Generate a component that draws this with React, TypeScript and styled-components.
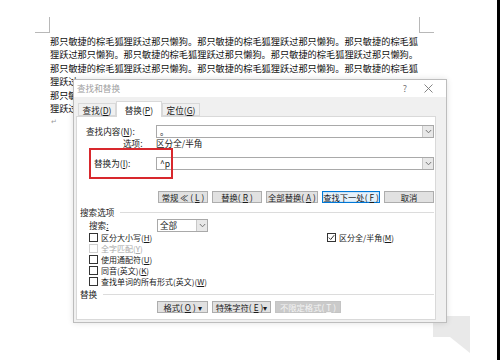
import React from "react";
import styled, { createGlobalStyle } from "styled-components";

const GlobalStyle = createGlobalStyle`
  html, body {
    margin: 0;
    padding: 0;
    background: #fff;
  }
  body {
    font-family: "Noto Sans CJK SC", "Noto Sans", sans-serif;
  }
`;

const Page = styled.div`
  position: relative;
  width: 500px;
  height: 360px;
  overflow: hidden;
  box-sizing: border-box;
  border-right: 3px solid #000;
  padding-top: 17px;
  background: #fff;
`;

const MarkRow = styled.div`
  display: flex;
  justify-content: space-between;
  width: 399px;
  margin-left: 35px;
`;

const Mark = styled.div<{ $side: "left" | "right" }>`
  width: 15px;
  height: 16px;
  box-sizing: border-box;
  border-bottom: 1px solid #b8b8b8;
  ${(p) =>
    p.$side === "left"
      ? "border-right: 1px solid #b8b8b8;"
      : "border-left: 1px solid #b8b8b8;"}
`;

const TextBlock = styled.div`
  margin: 2px 0 0 50px;
  width: 368px;
`;

const Line = styled.div<{ $full?: boolean }>`
  height: 13.4px;
  line-height: 13.4px;
  font-size: 9.2px;
  white-space: nowrap;
  text-align: ${(p) => (p.$full ? "justify" : "left")};
  text-align-last: ${(p) => (p.$full ? "justify" : "left")};
  color: #111;
`;

const ParaMark = styled.div`
  height: 13px;
  line-height: 13px;
  font-size: 7px;
  color: #999;
  margin-left: 1px;
`;

const Dialog = styled.div`
  position: absolute;
  left: 73px;
  top: 79px;
  width: 374px;
  height: 244px;
  box-sizing: border-box;
  border: 1px solid #bdbdbd;
  background: #f0f0f0;
  display: flex;
  flex-direction: column;
  font-size: 8.6px;
  color: #1a1a1a;
  box-shadow: 0 0 6px rgba(0, 0, 0, 0.12);
`;

const TitleBar = styled.div`
  height: 17px;
  background: #fff;
  display: flex;
  align-items: center;
  padding-left: 3px;
`;

const Title = styled.span`
  flex: 1;
  color: #a0a0a0;
  line-height: 17px;
`;

const TitleButton = styled.span<{ $w: number }>`
  width: ${(p) => p.$w}px;
  display: flex;
  justify-content: center;
  align-items: center;
  color: #777;
  font-size: 9px;
`;

const TabBar = styled.div`
  height: 19px;
  display: flex;
  align-items: flex-end;
  padding-left: 4px;
  position: relative;
  z-index: 1;
`;

const Tab = styled.div<{ $active?: boolean; $w: number }>`
  width: ${(p) => p.$w}px;
  height: ${(p) => (p.$active ? 16 : 13)}px;
  margin-bottom: ${(p) => (p.$active ? -1 : 0)}px;
  box-sizing: border-box;
  display: flex;
  justify-content: center;
  align-items: center;
  background: ${(p) => (p.$active ? "#fff" : "#f0f0f0")};
  border: 1px solid #d9d9d9;
  border-bottom: ${(p) => (p.$active ? "none" : "1px solid #d9d9d9")};
  line-height: 12px;
`;

const Panel = styled.div`
  position: relative;
  flex: 1;
  margin: 0 10px 2px 2px;
  box-sizing: border-box;
  border: 1px solid #d9d9d9;
  background: #fff;
  padding: 8px 1px 0 9px;
  display: flex;
  flex-direction: column;
`;

const FieldRow = styled.div<{ $top?: number }>`
  display: flex;
  align-items: center;
  height: 13px;
  margin-top: ${(p) => p.$top ?? 0}px;
`;

const Label = styled.span<{ $w: number; $indent?: number }>`
  width: ${(p) => p.$w}px;
  padding-left: ${(p) => p.$indent ?? 0}px;
  box-sizing: border-box;
  white-space: nowrap;
  line-height: 13px;
`;

const InputBox = styled.div`
  flex: 1;
  height: 13px;
  box-sizing: border-box;
  border: 1px solid #a9a9a9;
  display: flex;
  align-items: center;
  padding-left: 3px;
  background: #fff;
`;

const InputText = styled.span`
  flex: 1;
  line-height: 11px;
  font-size: 8.6px;
`;

const DropButton = styled.span`
  width: 11px;
  height: 11px;
  box-sizing: border-box;
  border-left: 1px solid #c8c8c8;
  background: #e8e8e8;
  display: flex;
  justify-content: center;
  align-items: center;
`;

const OptionRow = styled.div`
  display: flex;
  height: 11px;
  line-height: 11px;
  align-items: center;
`;

const RedFrame = styled.div`
  position: absolute;
  left: 12px;
  top: 31px;
  width: 84px;
  height: 31px;
  box-sizing: border-box;
  border: 2px solid #d8282d;
`;

const ButtonRow = styled.div<{ $top: number; $left: number }>`
  display: flex;
  gap: 4px;
  height: 12px;
  margin-top: ${(p) => p.$top}px;
  padding-left: ${(p) => p.$left}px;
`;

const Button = styled.div<{ $w: number; $focus?: boolean; $disabled?: boolean }>`
  width: ${(p) => p.$w}px;
  height: 12px;
  box-sizing: border-box;
  display: flex;
  justify-content: center;
  align-items: center;
  gap: 2px;
  white-space: nowrap;
  line-height: 10px;
  font-size: 8.3px;
  background: ${(p) => (p.$disabled ? "#cacaca" : p.$focus ? "#e5f1fb" : "#e1e1e1")};
  color: ${(p) => (p.$disabled ? "#f4f4f4" : "#1a1a1a")};
  border: 1px solid ${(p) => (p.$focus ? "#0078d7" : p.$disabled ? "#c4c4c4" : "#adadad")};
  box-shadow: ${(p) => (p.$focus ? "inset 0 0 0 1px #cce4f7" : "none")};
`;

const Section = styled.div<{ $top: number }>`
  display: flex;
  align-items: center;
  height: 12px;
  margin-top: ${(p) => p.$top}px;
  margin-left: -6px;
  gap: 6px;
`;

const SectionTitle = styled.span`
  white-space: nowrap;
  line-height: 12px;
`;

const Rule = styled.span`
  flex: 1;
  height: 1px;
  background: #dcdcdc;
`;

const SearchRow = styled.div`
  display: flex;
  align-items: center;
  height: 13px;
  margin-top: 1px;
  padding-left: 3px;
`;

const SelectBox = styled.div`
  width: 51px;
  height: 13px;
  box-sizing: border-box;
  border: 1px solid #a9a9a9;
  display: flex;
  align-items: center;
  padding-left: 2px;
`;

const CheckGrid = styled.div`
  display: grid;
  grid-template-columns: 238px 1fr;
  grid-auto-rows: 11px;
  padding-left: 3px;
`;

const CheckItem = styled.div<{ $disabled?: boolean }>`
  display: flex;
  align-items: center;
  gap: 3px;
  white-space: nowrap;
  font-size: 8px;
  line-height: 11px;
  color: ${(p) => (p.$disabled ? "#a8a8a8" : "#1a1a1a")};
`;

const Box = styled.span<{ $disabled?: boolean }>`
  width: 9px;
  height: 9px;
  box-sizing: border-box;
  border: 1px solid ${(p) => (p.$disabled ? "#cfcfcf" : "#333")};
  background: #fff;
  display: flex;
  justify-content: center;
  align-items: center;
`;

const Corner = styled.svg`
  position: absolute;
  left: 432px;
  top: 315px;
`;

const Key = styled.u`
  text-underline-offset: 1px;
`;

const Chevron = () => (
  <svg width="7" height="5" viewBox="0 0 7 5">
    <polyline points="0.8,1 3.5,3.8 6.2,1" fill="none" stroke="#777" strokeWidth="1" />
  </svg>
);

const Check = () => (
  <svg width="7" height="7" viewBox="0 0 7 7">
    <polyline points="0.8,3.6 2.7,5.5 6.2,1.2" fill="none" stroke="#333" strokeWidth="1" />
  </svg>
);

const CloseIcon = () => (
  <svg width="9" height="9" viewBox="0 0 9 9">
    <path d="M0.5 0.5 L8.5 8.5 M8.5 0.5 L0.5 8.5" stroke="#777" strokeWidth="0.9" />
  </svg>
);

const lineA = "那只敏捷的棕毛狐狸跃过那只懒狗。那只敏捷的棕毛狐狸跃过那只懒狗。那只敏捷的棕毛狐";
const lineB = "狸跃过那只懒狗。那只敏捷的棕毛狐狸跃过那只懒狗。那只敏捷的棕毛狐狸跃过那只懒狗。";
// the last three lines run under the dialog: only their start shows
const lines = [
  { text: lineA, full: true },
  { text: lineB, full: true },
  { text: lineA, full: true },
  { text: "狸跃过", full: false },
  { text: "那只敏", full: false },
  { text: "狸跃过", full: false },
];

const CheckOption = ({
  label,
  checked,
  disabled,
}: {
  label: React.ReactNode;
  checked?: boolean;
  disabled?: boolean;
}) => (
  <CheckItem $disabled={disabled}>
    <Box $disabled={disabled}>{checked && <Check />}</Box>
    <span>{label}</span>
  </CheckItem>
);

export default function App() {
  return (
    <>
      <GlobalStyle />
      <Page>
        <MarkRow>
          <Mark $side="left" />
          <Mark $side="right" />
        </MarkRow>
        <TextBlock>
          {lines.map((l, i) => (
            <Line key={i} $full={l.full}>
              {l.text}
            </Line>
          ))}
          <ParaMark>↵</ParaMark>
        </TextBlock>

        <Corner width="40" height="42" viewBox="0 0 40 42">
          <polygon points="1,1 38,1 38,38 18,22 1,22" fill="#e9e9e9" />
        </Corner>

        <Dialog>
          <TitleBar>
            <Title>查找和替换</Title>
            <TitleButton $w={22}>?</TitleButton>
            <TitleButton $w={24}>
              <CloseIcon />
            </TitleButton>
            <TitleButton $w={6} />
          </TitleBar>
          <TabBar>
            <Tab $w={38}>
              查找(<Key>D</Key>)
            </Tab>
            <Tab $w={46} $active>
              替换(<Key>P</Key>)
            </Tab>
            <Tab $w={38}>
              定位(<Key>G</Key>)
            </Tab>
          </TabBar>
          <Panel>
            <FieldRow>
              <Label $w={70}>
                查找内容(<Key>N</Key>):
              </Label>
              <InputBox>
                <InputText>。</InputText>
                <DropButton>
                  <Chevron />
                </DropButton>
              </InputBox>
            </FieldRow>
            <OptionRow>
              <Label $w={70} $indent={37}>
                选项:
              </Label>
              <span>区分全/半角</span>
            </OptionRow>
            <FieldRow $top={8}>
              <Label $w={70} $indent={8}>
                替换为(<Key>I</Key>):
              </Label>
              <InputBox>
                <InputText>^p</InputText>
                <DropButton>
                  <Chevron />
                </DropButton>
              </InputBox>
            </FieldRow>
            <RedFrame />

            <ButtonRow $top={21} $left={72}>
              <Button $w={50}>
                常规 ≪ (<Key>L</Key>)
              </Button>
              <Button $w={50}>
                替换(<Key>R</Key>)
              </Button>
              <Button $w={52}>
                全部替换(<Key>A</Key>)
              </Button>
              <Button $w={58} $focus>
                查找下一处(<Key>F</Key>)
              </Button>
              <Button $w={50}>取消</Button>
            </ButtonRow>

            <Section $top={3}>
              <SectionTitle>搜索选项</SectionTitle>
              <Rule />
            </Section>
            <SearchRow>
              <Label $w={68}>
                搜索<Key>:</Key>
              </Label>
              <SelectBox>
                <InputText>全部</InputText>
                <DropButton>
                  <Chevron />
                </DropButton>
              </SelectBox>
            </SearchRow>
            <CheckGrid>
              <CheckOption label={<>区分大小写(<Key>H</Key>)</>} />
              <CheckOption checked label={<>区分全/半角(<Key>M</Key>)</>} />
              <CheckOption disabled label={<>全字匹配(<Key>Y</Key>)</>} />
              <span />
              <CheckOption label={<>使用通配符(<Key>U</Key>)</>} />
              <span />
              <CheckOption label={<>同音(英文)(<Key>K</Key>)</>} />
              <span />
              <CheckOption label={<>查找单词的所有形式(英文)(<Key>W</Key>)</>} />
              <span />
            </CheckGrid>

            <Section $top={1}>
              <SectionTitle>替换</SectionTitle>
              <Rule />
            </Section>
            <ButtonRow $top={1} $left={71}>
              <Button $w={51}>
                格式(<Key>O</Key>) ▾
              </Button>
              <Button $w={59}>
                特殊字符(<Key>E</Key>)▾
              </Button>
              <Button $w={66} $disabled>
                不限定格式(<Key>T</Key>)
              </Button>
            </ButtonRow>
          </Panel>
        </Dialog>
      </Page>
    </>
  );
}
